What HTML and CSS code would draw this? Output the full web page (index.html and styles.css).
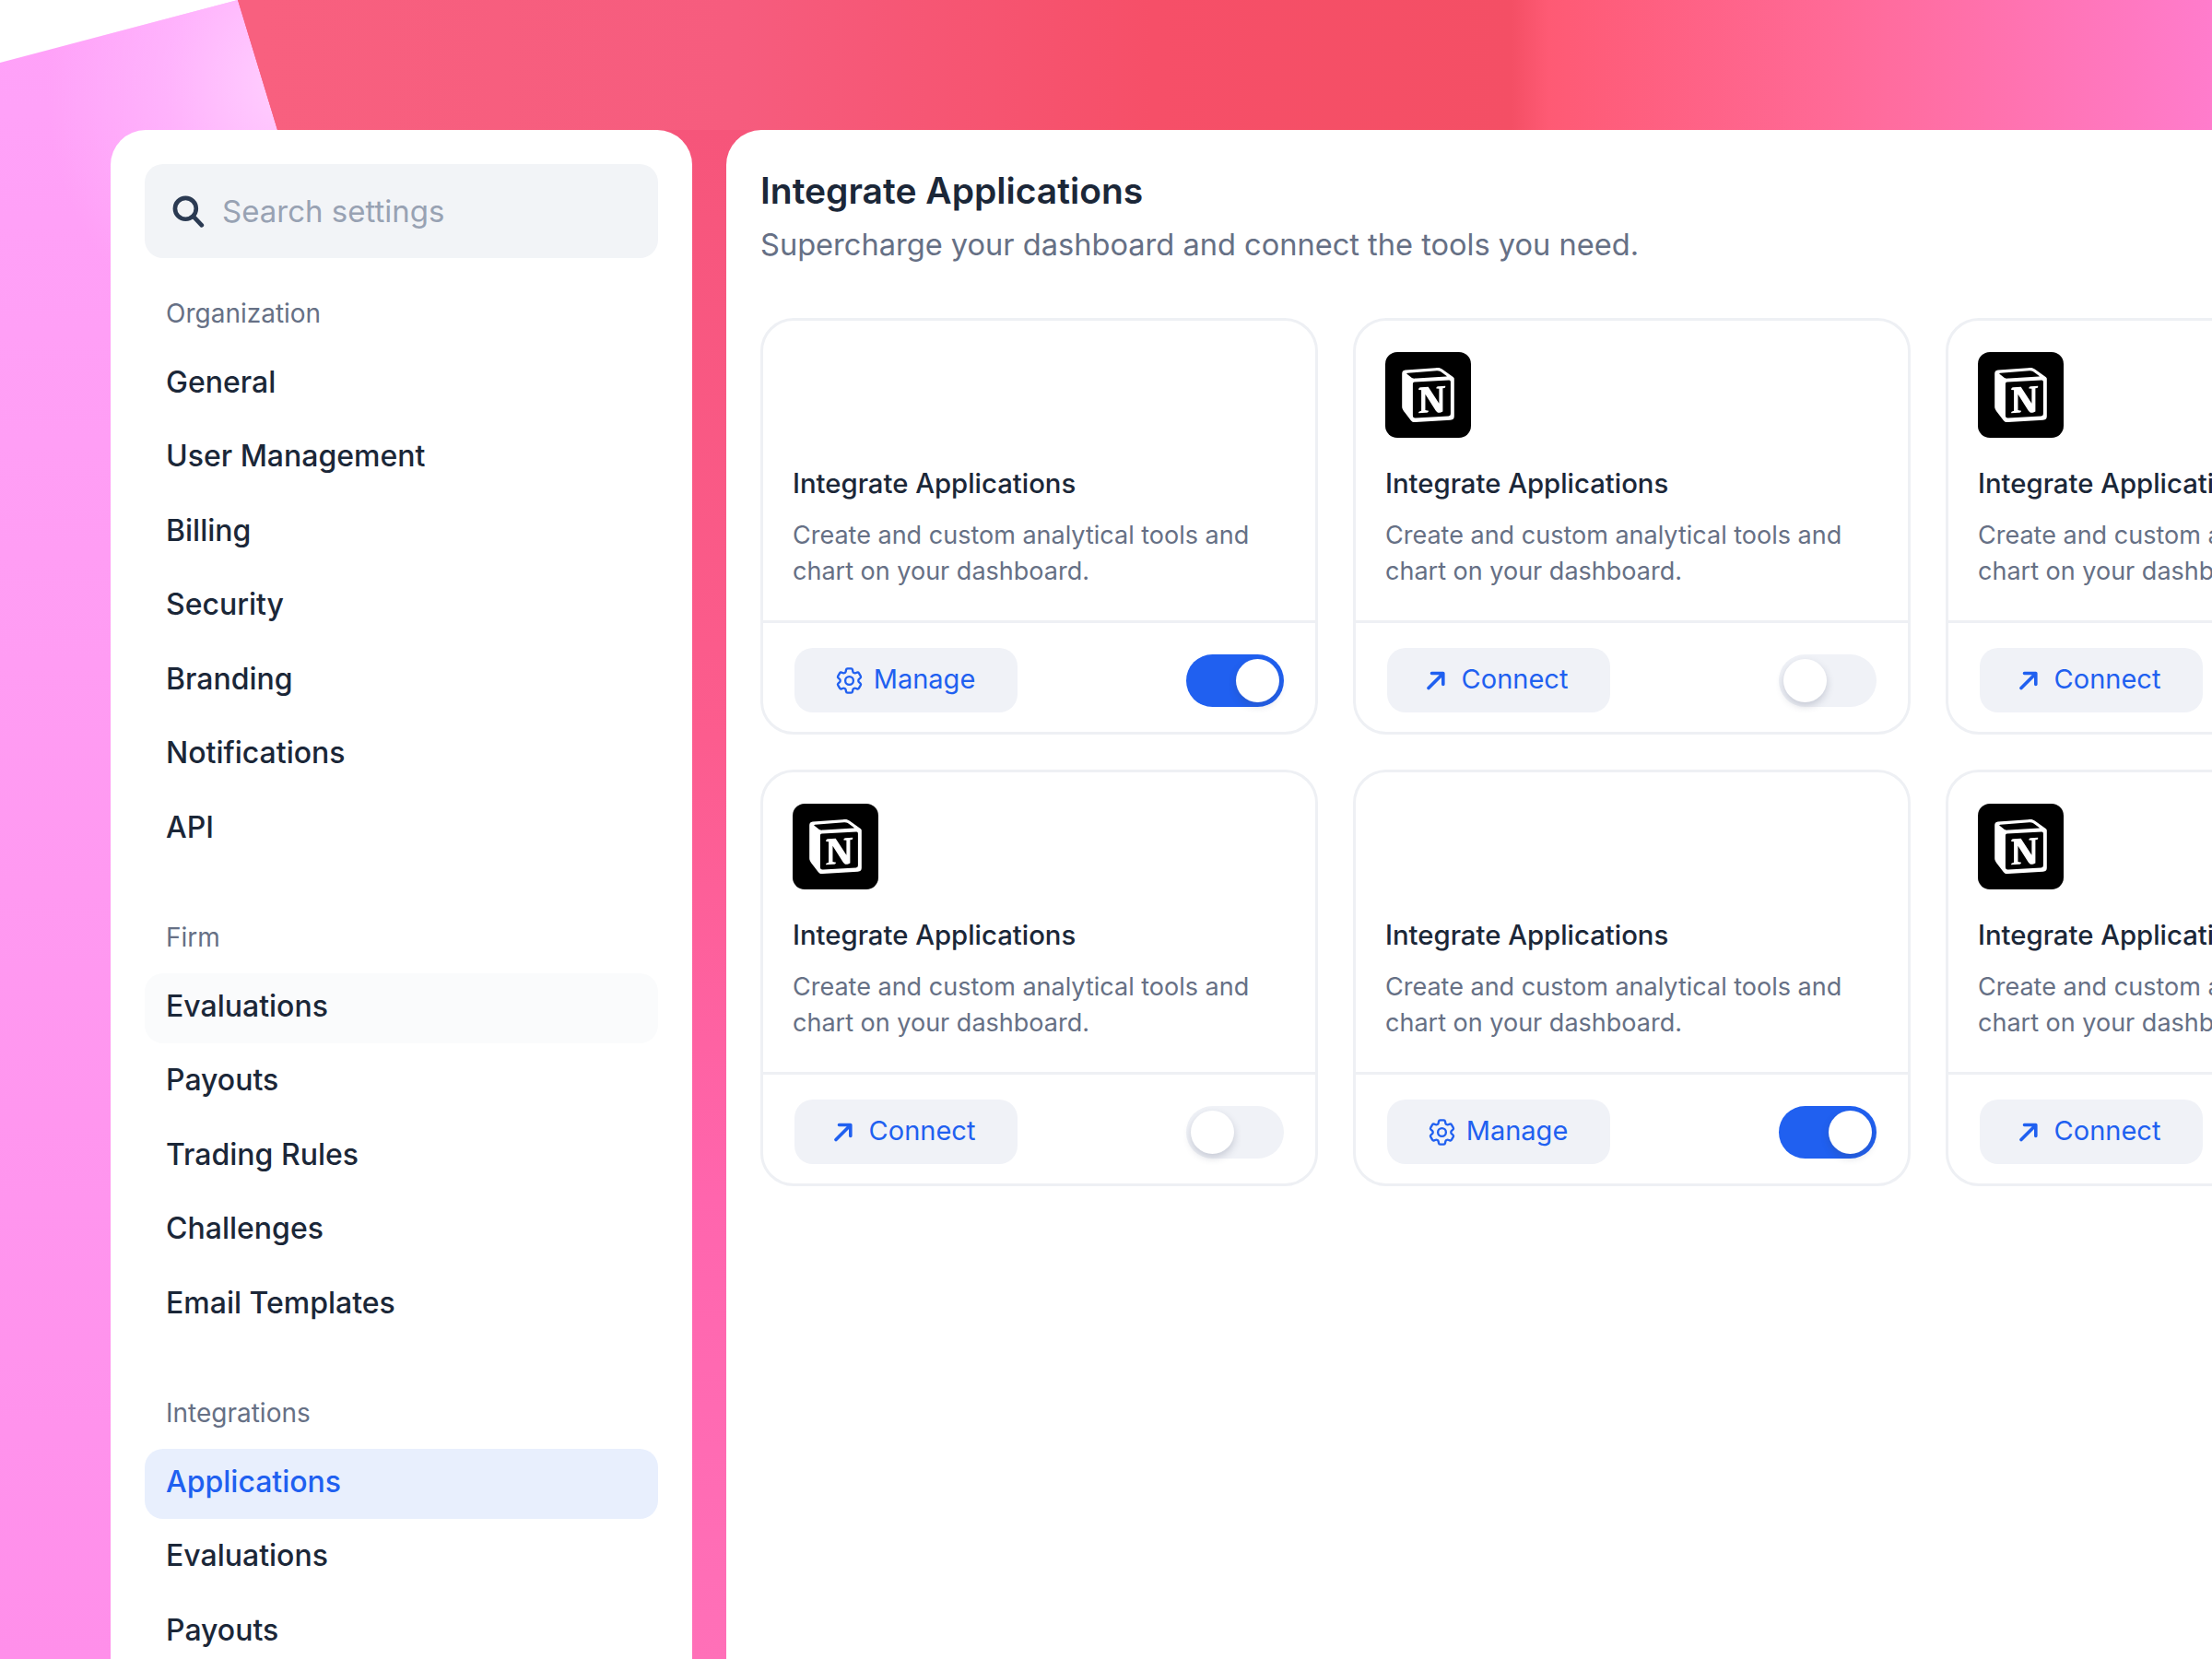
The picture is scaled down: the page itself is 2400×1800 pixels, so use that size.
FILE: index.html
```html
<!DOCTYPE html>
<html>

<head>
    <title>Integrate Applications</title>
    <link rel="stylesheet" href="styles.css">
</head>

<body>
    <div class="bg-pink"></div>
    <div class="bg-red"></div>

    <div class="page">
        <aside class="sidebar">
            <div class="search">
                <svg class="search-icon" viewBox="0 0 34 34" fill="none" stroke="#2b3a52" stroke-width="4.4" stroke-linecap="round">
                    <circle cx="14.5" cy="14.5" r="10.8" />
                    <path d="M22.5 22.5 L31 31.5" />
                </svg>
                <span>Search settings</span>
            </div>

            <p class="nav-label">Organization</p>
            <nav class="nav-group">
                <a class="nav-item">General</a>
                <a class="nav-item">User Management</a>
                <a class="nav-item">Billing</a>
                <a class="nav-item">Security</a>
                <a class="nav-item">Branding</a>
                <a class="nav-item">Notifications</a>
                <a class="nav-item">API</a>
            </nav>

            <p class="nav-label">Firm</p>
            <nav class="nav-group">
                <a class="nav-item hover">Evaluations</a>
                <a class="nav-item">Payouts</a>
                <a class="nav-item">Trading Rules</a>
                <a class="nav-item">Challenges</a>
                <a class="nav-item">Email Templates</a>
            </nav>

            <p class="nav-label">Integrations</p>
            <nav class="nav-group">
                <a class="nav-item active">Applications</a>
                <a class="nav-item">Evaluations</a>
                <a class="nav-item">Payouts</a>
            </nav>
        </aside>

        <main class="content">
            <h1>Integrate Applications</h1>
            <p class="subtitle">Supercharge your dashboard and connect the tools you need.</p>

            <div class="card-grid">
                <div class="card">
                    <div class="card-body">
                        <div class="app-logo blank"></div>
                        <h2>Integrate Applications</h2>
                        <p>Create and custom analytical tools and<br>chart on your dashboard.</p>
                    </div>
                    <div class="card-footer">
                        <button class="btn">
                            <svg class="gear" viewBox="0 0 24 24" fill="none" stroke="currentColor" stroke-width="1.6"><path d="M9.594 3.94c.09-.542.56-.94 1.11-.94h2.593c.55 0 1.02.398 1.11.94l.213 1.281c.063.374.313.686.645.87.074.04.147.083.22.127.324.196.72.257 1.075.124l1.217-.456a1.125 1.125 0 011.37.49l1.296 2.247a1.125 1.125 0 01-.26 1.431l-1.003.827c-.293.24-.438.613-.431.992a6.759 6.759 0 010 .255c-.007.378.138.75.43.99l1.005.828c.424.35.534.954.26 1.43l-1.298 2.247a1.125 1.125 0 01-1.369.491l-1.217-.456c-.355-.133-.75-.072-1.076.124a6.57 6.57 0 01-.22.128c-.331.183-.581.495-.644.869l-.213 1.28c-.09.543-.56.941-1.11.941h-2.594c-.55 0-1.02-.398-1.11-.94l-.213-1.281c-.062-.374-.312-.686-.644-.87a6.52 6.52 0 01-.22-.127c-.325-.196-.72-.257-1.076-.124l-1.217.456a1.125 1.125 0 01-1.369-.49l-1.297-2.247a1.125 1.125 0 01.26-1.431l1.004-.827c.292-.24.437-.613.43-.992a6.932 6.932 0 010-.255c.007-.378-.138-.75-.43-.99l-1.004-.828a1.125 1.125 0 01-.26-1.43l1.297-2.247a1.125 1.125 0 011.37-.491l1.216.456c.356.133.751.072 1.076-.124.072-.044.146-.087.22-.128.332-.183.582-.495.644-.869l.214-1.281z"/><circle cx="12" cy="12" r="3"/></svg>
                            Manage
                        </button>
                        <div class="toggle on"><span class="knob"></span></div>
                    </div>
                </div>

                <div class="card">
                    <div class="card-body">
                        <div class="app-logo"><svg viewBox="0 0 24 24" fill="#fff"><path d="M4.459 4.208c.746.606 1.026.56 2.428.466l13.215-.793c.28 0 .047-.28-.046-.326L17.86 1.968c-.42-.326-.981-.7-2.055-.607L3.01 2.295c-.466.046-.56.28-.374.466zm.793 3.08v13.904c0 .747.373 1.027 1.214.98l14.523-.84c.841-.046.935-.56.935-1.167V6.354c0-.606-.233-.933-.748-.887l-15.177.887c-.56.047-.747.327-.747.933zm14.337.745c.093.42 0 .84-.42.888l-.7.14v10.264c-.608.327-1.168.514-1.635.514-.748 0-.935-.234-1.495-.933l-4.577-7.186v6.952L12.21 19s0 .84-1.168.84l-3.222.186c-.093-.186 0-.653.327-.746l.84-.233V9.854L7.822 9.76c-.094-.42.14-1.026.793-1.073l3.456-.233 4.764 7.279v-6.44l-1.215-.139c-.093-.514.28-.887.747-.933zM1.936 1.035l13.31-.98c1.634-.14 2.055-.047 3.082.7l4.249 2.986c.7.513.934.653.934 1.213v16.378c0 1.026-.373 1.634-1.68 1.726l-15.458.934c-.98.047-1.448-.093-1.962-.747l-3.129-4.06c-.56-.747-.793-1.306-.793-1.96V2.667c0-.839.374-1.54 1.447-1.632z"/></svg></div>
                        <h2>Integrate Applications</h2>
                        <p>Create and custom analytical tools and<br>chart on your dashboard.</p>
                    </div>
                    <div class="card-footer">
                        <button class="btn">
                            <svg class="arrow" viewBox="0 0 22 22" fill="none" stroke="currentColor" stroke-width="3.6" stroke-linecap="round" stroke-linejoin="round"><path d="M3 19.5 L18.5 4 M6.5 3.5 H18.8 V15.5"/></svg>
                            Connect
                        </button>
                        <div class="toggle"><span class="knob"></span></div>
                    </div>
                </div>

                <div class="card">
                    <div class="card-body">
                        <div class="app-logo"><svg viewBox="0 0 24 24" fill="#fff"><path d="M4.459 4.208c.746.606 1.026.56 2.428.466l13.215-.793c.28 0 .047-.28-.046-.326L17.86 1.968c-.42-.326-.981-.7-2.055-.607L3.01 2.295c-.466.046-.56.28-.374.466zm.793 3.08v13.904c0 .747.373 1.027 1.214.98l14.523-.84c.841-.046.935-.56.935-1.167V6.354c0-.606-.233-.933-.748-.887l-15.177.887c-.56.047-.747.327-.747.933zm14.337.745c.093.42 0 .84-.42.888l-.7.14v10.264c-.608.327-1.168.514-1.635.514-.748 0-.935-.234-1.495-.933l-4.577-7.186v6.952L12.21 19s0 .84-1.168.84l-3.222.186c-.093-.186 0-.653.327-.746l.84-.233V9.854L7.822 9.76c-.094-.42.14-1.026.793-1.073l3.456-.233 4.764 7.279v-6.44l-1.215-.139c-.093-.514.28-.887.747-.933zM1.936 1.035l13.31-.98c1.634-.14 2.055-.047 3.082.7l4.249 2.986c.7.513.934.653.934 1.213v16.378c0 1.026-.373 1.634-1.68 1.726l-15.458.934c-.98.047-1.448-.093-1.962-.747l-3.129-4.06c-.56-.747-.793-1.306-.793-1.96V2.667c0-.839.374-1.54 1.447-1.632z"/></svg></div>
                        <h2>Integrate Applications</h2>
                        <p>Create and custom analytical tools and<br>chart on your dashboard.</p>
                    </div>
                    <div class="card-footer">
                        <button class="btn">
                            <svg class="arrow" viewBox="0 0 22 22" fill="none" stroke="currentColor" stroke-width="3.6" stroke-linecap="round" stroke-linejoin="round"><path d="M3 19.5 L18.5 4 M6.5 3.5 H18.8 V15.5"/></svg>
                            Connect
                        </button>
                        <div class="toggle"><span class="knob"></span></div>
                    </div>
                </div>

                <div class="card">
                    <div class="card-body">
                        <div class="app-logo"><svg viewBox="0 0 24 24" fill="#fff"><path d="M4.459 4.208c.746.606 1.026.56 2.428.466l13.215-.793c.28 0 .047-.28-.046-.326L17.86 1.968c-.42-.326-.981-.7-2.055-.607L3.01 2.295c-.466.046-.56.28-.374.466zm.793 3.08v13.904c0 .747.373 1.027 1.214.98l14.523-.84c.841-.046.935-.56.935-1.167V6.354c0-.606-.233-.933-.748-.887l-15.177.887c-.56.047-.747.327-.747.933zm14.337.745c.093.42 0 .84-.42.888l-.7.14v10.264c-.608.327-1.168.514-1.635.514-.748 0-.935-.234-1.495-.933l-4.577-7.186v6.952L12.21 19s0 .84-1.168.84l-3.222.186c-.093-.186 0-.653.327-.746l.84-.233V9.854L7.822 9.76c-.094-.42.14-1.026.793-1.073l3.456-.233 4.764 7.279v-6.44l-1.215-.139c-.093-.514.28-.887.747-.933zM1.936 1.035l13.31-.98c1.634-.14 2.055-.047 3.082.7l4.249 2.986c.7.513.934.653.934 1.213v16.378c0 1.026-.373 1.634-1.68 1.726l-15.458.934c-.98.047-1.448-.093-1.962-.747l-3.129-4.06c-.56-.747-.793-1.306-.793-1.96V2.667c0-.839.374-1.54 1.447-1.632z"/></svg></div>
                        <h2>Integrate Applications</h2>
                        <p>Create and custom analytical tools and<br>chart on your dashboard.</p>
                    </div>
                    <div class="card-footer">
                        <button class="btn">
                            <svg class="arrow" viewBox="0 0 22 22" fill="none" stroke="currentColor" stroke-width="3.6" stroke-linecap="round" stroke-linejoin="round"><path d="M3 19.5 L18.5 4 M6.5 3.5 H18.8 V15.5"/></svg>
                            Connect
                        </button>
                        <div class="toggle"><span class="knob"></span></div>
                    </div>
                </div>

                <div class="card">
                    <div class="card-body">
                        <div class="app-logo blank"></div>
                        <h2>Integrate Applications</h2>
                        <p>Create and custom analytical tools and<br>chart on your dashboard.</p>
                    </div>
                    <div class="card-footer">
                        <button class="btn">
                            <svg class="gear" viewBox="0 0 24 24" fill="none" stroke="currentColor" stroke-width="1.6"><path d="M9.594 3.94c.09-.542.56-.94 1.11-.94h2.593c.55 0 1.02.398 1.11.94l.213 1.281c.063.374.313.686.645.87.074.04.147.083.22.127.324.196.72.257 1.075.124l1.217-.456a1.125 1.125 0 011.37.49l1.296 2.247a1.125 1.125 0 01-.26 1.431l-1.003.827c-.293.24-.438.613-.431.992a6.759 6.759 0 010 .255c-.007.378.138.75.43.99l1.005.828c.424.35.534.954.26 1.43l-1.298 2.247a1.125 1.125 0 01-1.369.491l-1.217-.456c-.355-.133-.75-.072-1.076.124a6.57 6.57 0 01-.22.128c-.331.183-.581.495-.644.869l-.213 1.28c-.09.543-.56.941-1.11.941h-2.594c-.55 0-1.02-.398-1.11-.94l-.213-1.281c-.062-.374-.312-.686-.644-.87a6.52 6.52 0 01-.22-.127c-.325-.196-.72-.257-1.076-.124l-1.217.456a1.125 1.125 0 01-1.369-.49l-1.297-2.247a1.125 1.125 0 01.26-1.431l1.004-.827c.292-.24.437-.613.43-.992a6.932 6.932 0 010-.255c.007-.378-.138-.75-.43-.99l-1.004-.828a1.125 1.125 0 01-.26-1.43l1.297-2.247a1.125 1.125 0 011.37-.491l1.216.456c.356.133.751.072 1.076-.124.072-.044.146-.087.22-.128.332-.183.582-.495.644-.869l.214-1.281z"/><circle cx="12" cy="12" r="3"/></svg>
                            Manage
                        </button>
                        <div class="toggle on"><span class="knob"></span></div>
                    </div>
                </div>

                <div class="card">
                    <div class="card-body">
                        <div class="app-logo"><svg viewBox="0 0 24 24" fill="#fff"><path d="M4.459 4.208c.746.606 1.026.56 2.428.466l13.215-.793c.28 0 .047-.28-.046-.326L17.86 1.968c-.42-.326-.981-.7-2.055-.607L3.01 2.295c-.466.046-.56.28-.374.466zm.793 3.08v13.904c0 .747.373 1.027 1.214.98l14.523-.84c.841-.046.935-.56.935-1.167V6.354c0-.606-.233-.933-.748-.887l-15.177.887c-.56.047-.747.327-.747.933zm14.337.745c.093.42 0 .84-.42.888l-.7.14v10.264c-.608.327-1.168.514-1.635.514-.748 0-.935-.234-1.495-.933l-4.577-7.186v6.952L12.21 19s0 .84-1.168.84l-3.222.186c-.093-.186 0-.653.327-.746l.84-.233V9.854L7.822 9.76c-.094-.42.14-1.026.793-1.073l3.456-.233 4.764 7.279v-6.44l-1.215-.139c-.093-.514.28-.887.747-.933zM1.936 1.035l13.31-.98c1.634-.14 2.055-.047 3.082.7l4.249 2.986c.7.513.934.653.934 1.213v16.378c0 1.026-.373 1.634-1.68 1.726l-15.458.934c-.98.047-1.448-.093-1.962-.747l-3.129-4.06c-.56-.747-.793-1.306-.793-1.96V2.667c0-.839.374-1.54 1.447-1.632z"/></svg></div>
                        <h2>Integrate Applications</h2>
                        <p>Create and custom analytical tools and<br>chart on your dashboard.</p>
                    </div>
                    <div class="card-footer">
                        <button class="btn">
                            <svg class="arrow" viewBox="0 0 22 22" fill="none" stroke="currentColor" stroke-width="3.6" stroke-linecap="round" stroke-linejoin="round"><path d="M3 19.5 L18.5 4 M6.5 3.5 H18.8 V15.5"/></svg>
                            Connect
                        </button>
                        <div class="toggle"><span class="knob"></span></div>
                    </div>
                </div>
            </div>
        </main>
    </div>
</body>

</html>
```

FILE: styles.css
```css
html,
body {
    margin: 0;
    padding: 0;
    width: 2400px;
    height: 1800px;
    overflow: hidden;
    background-color: #fff;
}

body {
    position: relative;
    font-family: Inter, "Noto Sans", sans-serif;
    color: #1b2738;
}

/* Backdrop shapes behind the panels */
.bg-pink {
    position: absolute;
    inset: 0;
    background:
        radial-gradient(ellipse 260px 300px at 310px 90px, #ffcfff 0%, rgba(255, 190, 255, 0.6) 50%, rgba(255, 160, 248, 0) 100%),
        linear-gradient(to bottom, #ffa2f9 0%, #ff9cf3 40%, #ff8fea 100%);
    clip-path: polygon(0 68px, 258px 0, 400px 0, 400px 1800px, 0 1800px);
}

.bg-red {
    position: absolute;
    inset: 0;
    background:
        linear-gradient(to right, #f8607f 280px, #f65c7e 800px, #f64f68 1250px, #f44f65 1640px, #fe5a74 1680px, #ff6a98 2000px, #ff7ccc 2400px) no-repeat 0 0 / 100% 141px,
        linear-gradient(to bottom, #f6557a 141px, #fc5c8e 800px, #ff65ad 1300px, #ff70b8 1800px);
    clip-path: polygon(258px 0, 2400px 0, 2400px 1800px, 600px 1800px, 600px 141px, 301px 141px);
}

.page {
    position: relative;
    display: flex;
    gap: 37px;
    height: 1659px;
    padding: 141px 0 0 120px;
    overflow: hidden;
}

.sidebar {
    flex: 0 0 631px;
    box-sizing: border-box;
    padding: 37px;
    background-color: #fff;
    border-radius: 38px 38px 0 0;
}

.search {
    display: flex;
    align-items: center;
    gap: 19px;
    height: 102px;
    padding-left: 29px;
    margin-bottom: 40px;
    background-color: #f2f4f7;
    border-radius: 20px;
    font-size: 33px;
    color: #98a2b3;
}

.search-icon {
    width: 36px;
    height: 36px;
}

.nav-label {
    height: 40px;
    line-height: 40px;
    margin: 0 0 19px;
    padding-left: 23px;
    font-size: 28px;
    color: #667085;
}

.nav-group {
    display: flex;
    flex-direction: column;
    gap: 4.5px;
    margin-bottom: 59px;
}

.nav-item {
    display: flex;
    align-items: center;
    box-sizing: border-box;
    height: 76px;
    padding: 0 23px 6px;
    border-radius: 20px;
    font-size: 32px;
    font-weight: 500;
}

.nav-item.hover {
    background-color: #fafbfc;
}

.nav-item.active {
    background-color: #e8effd;
    color: #2060f0;
}

.content {
    flex: 1;
    min-width: 0;
    box-sizing: border-box;
    padding: 0 0 0 37px;
    background-color: #fff;
    border-radius: 38px 0 0 0;
    overflow: hidden;
}

h1 {
    margin: 42px 0 0;
    height: 48px;
    line-height: 48px;
    font-size: 39px;
    font-weight: 600;
}

.subtitle {
    margin: 10px 0 0;
    height: 48px;
    line-height: 48px;
    font-size: 32.6px;
    color: #667085;
}

.card-grid {
    display: grid;
    grid-template-columns: repeat(3, 605px);
    gap: 38px;
    margin-top: 56px;
}

.card {
    box-sizing: border-box;
    height: 452px;
    border: 3px solid #eef0f4;
    border-radius: 36px;
    background-color: #fff;
}

.card-body {
    height: 328px;
    box-sizing: border-box;
    padding: 34px 32px 0;
    border-bottom: 3px solid #eef0f4;
}

.app-logo {
    display: flex;
    align-items: center;
    justify-content: center;
    width: 93px;
    height: 93px;
    border-radius: 13px;
    background-color: #000;
}

.app-logo.blank {
    background-color: transparent;
}

.app-logo svg {
    width: 59px;
    height: 59px;
}

.card h2 {
    margin: 30px 0 0;
    height: 40px;
    line-height: 40px;
    font-size: 29.3px;
    font-weight: 500;
}

.card p {
    margin: 16px 0 0;
    line-height: 39px;
    font-size: 27px;
    color: #667085;
}

.card-footer {
    display: flex;
    align-items: center;
    justify-content: space-between;
    box-sizing: border-box;
    height: 118px;
    padding: 6px 34px 0;
}

.btn {
    display: flex;
    align-items: center;
    justify-content: center;
    gap: 9px;
    width: 242px;
    height: 70px;
    padding: 0 4px 3px 0;
    border: none;
    border-radius: 20px;
    background-color: #f0f2f7;
    color: #2060f0;
    font-family: inherit;
    font-size: 29px;
    font-weight: 400;
}

.gear {
    width: 35px;
    height: 35px;
    margin-top: 3px;
}

.arrow {
    width: 22px;
    height: 22px;
    margin: 3px 8px 0 0;
}

.toggle {
    position: relative;
    width: 106px;
    height: 57px;
    border-radius: 29px;
    background-color: #f0f2f7;
}

.toggle.on {
    background-color: #2060f0;
}

.knob {
    position: absolute;
    top: 5px;
    left: 5px;
    width: 47px;
    height: 47px;
    border-radius: 50%;
    background-color: #fff;
    box-shadow: 0 4px 8px rgba(50, 60, 90, 0.22);
}

.toggle.on .knob {
    left: 54px;
}
```
